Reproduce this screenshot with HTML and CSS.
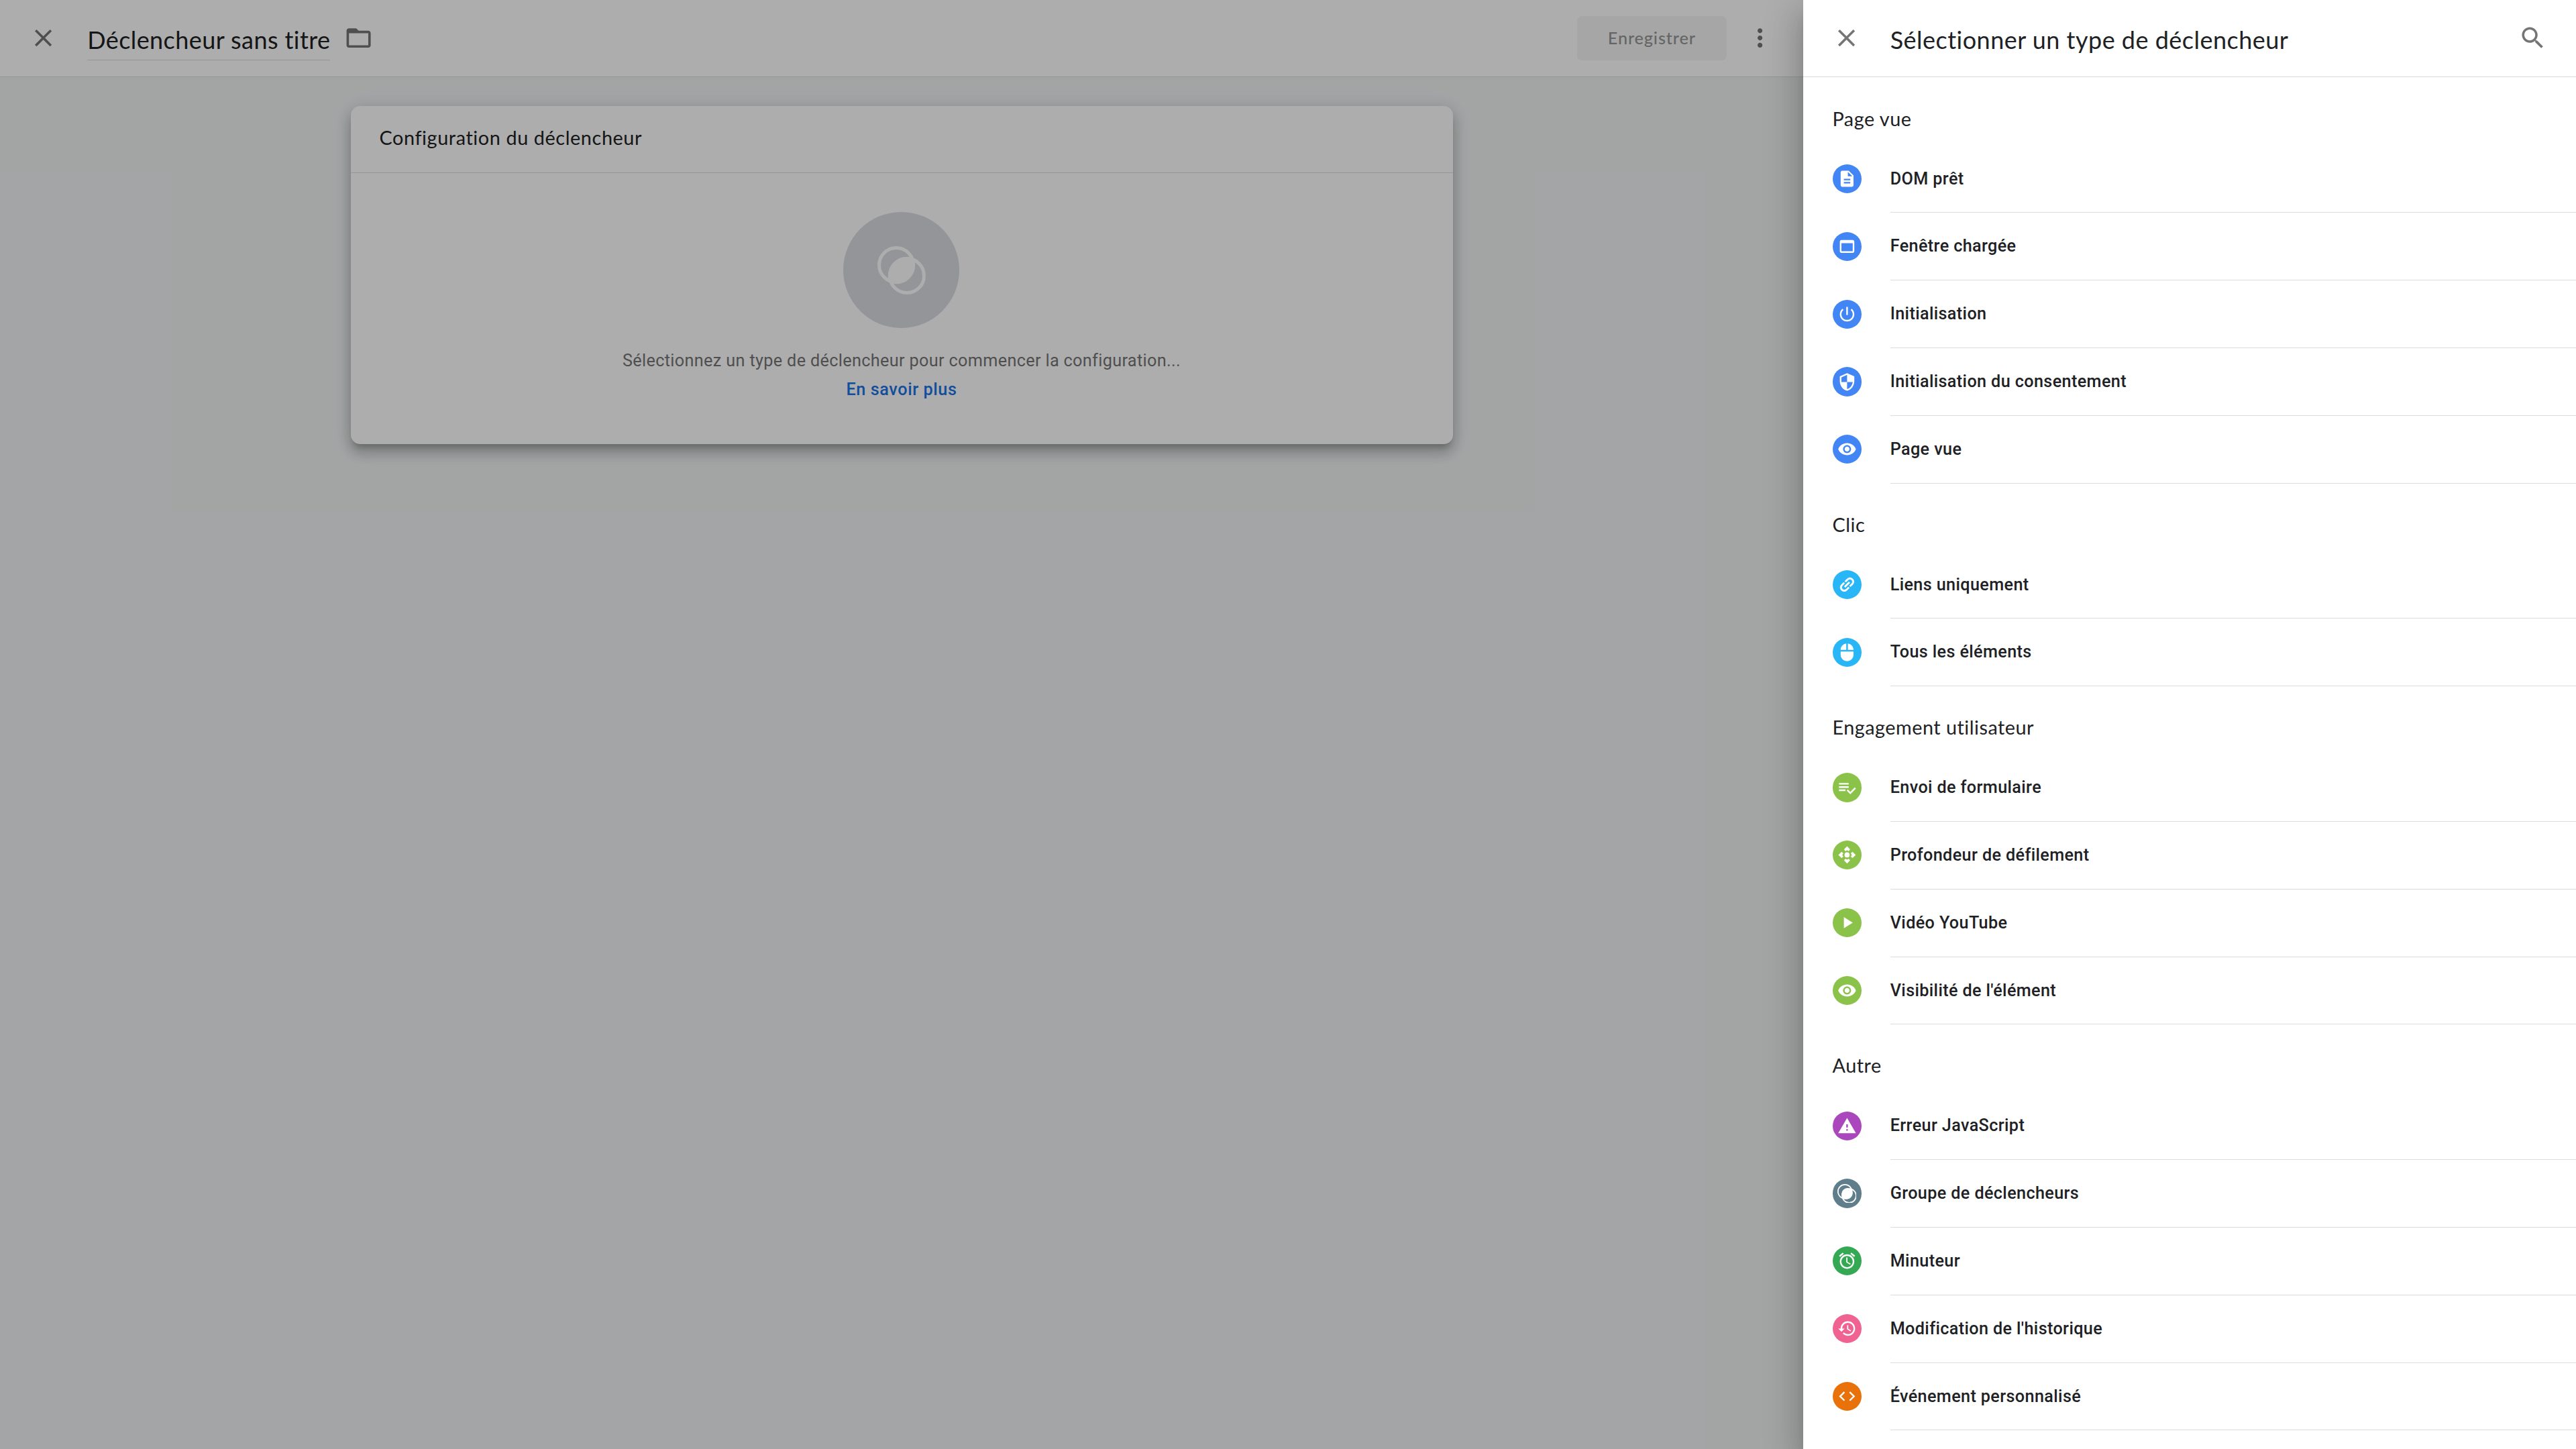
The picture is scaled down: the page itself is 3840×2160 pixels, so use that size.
FILE: index.html
```html
<!DOCTYPE html>
<html lang="fr">
	<head>
		<title>Déclencheur sans titre</title>
		<meta http-equiv="Content-Type" content="text/html; charset=utf-8">
		<link rel="stylesheet" href="styles.css">
	</head>
	<body>
		<div class="editor">
			<header class="bar">
				<svg class="icon close" viewBox="0 0 24 24"><path d="M19 6.41L17.59 5 12 10.59 6.41 5 5 6.41 10.59 12 5 17.59 6.41 19 12 13.41 17.59 19 19 17.59 13.41 12z"/></svg>
				<h1 class="name">Déclencheur sans titre</h1>
				<svg class="icon folder" viewBox="0 0 24 24"><path d="M20 6h-8l-2-2H4c-1.1 0-1.99.9-1.99 2L2 18c0 1.1.9 2 2 2h16c1.1 0 2-.9 2-2V8c0-1.1-.9-2-2-2zm0 12H4V8h16v10z"/></svg>
				<button class="save" disabled>Enregistrer</button>
				<svg class="icon more" viewBox="0 0 24 24"><path d="M12 8c1.1 0 2-.9 2-2s-.9-2-2-2-2 .9-2 2 .9 2 2 2zm0 2c-1.1 0-2 .9-2 2s.9 2 2 2 2-.9 2-2-.9-2-2-2zm0 6c-1.1 0-2 .9-2 2s.9 2 2 2 2-.9 2-2-.9-2-2-2z"/></svg>
			</header>
			<section class="card">
				<h2>Configuration du déclencheur</h2>
				<div class="empty">
					<div class="disc">
						<svg viewBox="0 0 40 40"><circle cx="15.6" cy="15.6" r="14.2"/><circle cx="24.4" cy="24.4" r="14.2"/><path d="M30.1 9.9A15.6 15.6 0 0 1 9.9 30.1A15.6 15.6 0 0 1 30.1 9.9z"/></svg>
					</div>
					<p>Sélectionnez un type de déclencheur pour commencer la configuration...</p>
					<a class="more-link">En savoir plus</a>
				</div>
			</section>
		</div>
		<div class="scrim"></div>
		<aside class="panel">
			<header class="bar">
				<svg class="icon close" viewBox="0 0 24 24"><path d="M19 6.41L17.59 5 12 10.59 6.41 5 5 6.41 10.59 12 5 17.59 6.41 19 12 13.41 17.59 19 19 17.59 13.41 12z"/></svg>
				<h1 class="title">Sélectionner un type de déclencheur</h1>
				<svg class="icon search" viewBox="0 0 24 24"><path d="M15.5 14h-.79l-.28-.27C15.41 12.59 16 11.11 16 9.5 16 5.91 13.09 3 9.5 3S3 5.91 3 9.5 5.91 16 9.5 16c1.61 0 3.09-.59 4.23-1.57l.27.28v.79l5 4.99L20.49 19l-4.99-5zm-6 0C7.01 14 5 11.99 5 9.5S7.01 5 9.5 5 14 7.01 14 9.5 11.99 14 9.5 14z"/></svg>
			</header>
			<div class="list">
				<h3>Page vue</h3>
				<ul class="types blue">
					<li><i><svg viewBox="0 0 24 24"><path d="M14 2H6c-1.1 0-1.99.9-1.99 2L4 20c0 1.1.89 2 1.99 2H18c1.1 0 2-.9 2-2V8l-6-6zm2 16H8v-2h8v2zm0-4H8v-2h8v2zm-3-5V3.5L18.5 9H13z"/></svg></i><span>DOM prêt</span></li>
					<li><i><svg viewBox="0 0 24 24"><path d="M19 4H5c-1.11 0-2 .9-2 2v12c0 1.1.89 2 2 2h14c1.1 0 2-.9 2-2V6c0-1.1-.89-2-2-2zm0 14H5V8h14v10z"/></svg></i><span>Fenêtre chargée</span></li>
					<li><i><svg viewBox="0 0 24 24"><path d="M13 3h-2v10h2V3zm4.83 2.17l-1.42 1.42C17.99 7.86 19 9.81 19 12c0 3.87-3.13 7-7 7s-7-3.13-7-7c0-2.19 1.01-4.14 2.58-5.42L6.17 5.17C4.23 6.82 3 9.26 3 12c0 4.97 4.03 9 9 9s9-4.03 9-9c0-2.74-1.23-5.18-3.17-6.83z"/></svg></i><span>Initialisation</span></li>
					<li><i><svg viewBox="0 0 24 24"><path d="M12 1L3 5v6c0 5.55 3.84 10.74 9 12 5.16-1.26 9-6.45 9-12V5l-9-4zm0 10.99h7c-.53 4.12-3.28 7.79-7 8.94V12H5V6.3l7-3.11v8.8z"/></svg></i><span>Initialisation du consentement</span></li>
					<li><i><svg viewBox="0 0 24 24"><path d="M12 4.5C7 4.5 2.73 7.61 1 12c1.73 4.39 6 7.5 11 7.5s9.27-3.11 11-7.5c-1.73-4.39-6-7.5-11-7.5zM12 17c-2.76 0-5-2.24-5-5s2.24-5 5-5 5 2.24 5 5-2.24 5-5 5zm0-8c-1.66 0-3 1.34-3 3s1.34 3 3 3 3-1.34 3-3-1.34-3-3-3z"/></svg></i><span>Page vue</span></li>
				</ul>
				<h3>Clic</h3>
				<ul class="types sky">
					<li><i><svg class="link" viewBox="0 0 24 24"><path transform="rotate(-45 12 12)" d="M3.9 12c0-1.71 1.39-3.1 3.1-3.1h4V7H7c-2.76 0-5 2.24-5 5s2.24 5 5 5h4v-1.9H7c-1.71 0-3.1-1.39-3.1-3.1zM8 13h8v-2H8v2zm9-6h-4v1.9h4c1.71 0 3.1 1.39 3.1 3.1s-1.39 3.1-3.1 3.1h-4V17h4c2.76 0 5-2.24 5-5s-2.24-5-5-5z"/></svg></i><span>Liens uniquement</span></li>
					<li><i><svg viewBox="0 0 24 24"><path d="M13 1.07V9h7c0-4.08-3.05-7.44-7-7.93zM4 15c0 4.42 3.58 8 8 8s8-3.58 8-8v-4H4v4zm7-13.93C7.05 1.56 4 4.92 4 9h7V1.07z"/></svg></i><span>Tous les éléments</span></li>
				</ul>
				<h3>Engagement utilisateur</h3>
				<ul class="types lime">
					<li><i><svg viewBox="0 0 24 24"><path d="M14 10H2v2h12v-2zm0-4H2v2h12V6zM2 16h8v-2H2v2zm19.5-4.5L23 13l-6.99 7-4.51-4.5L13 14l3.01 3 5.49-5.5z"/></svg></i><span>Envoi de formulaire</span></li>
					<li><i><svg viewBox="0 0 24 24"><circle cx="12" cy="12" r="3.2"/><path d="M12 1.2l3.8 4-1.9 2.2L12 6l-1.9 1.4-1.9-2.2zM12 22.8l3.8-4-1.9-2.2L12 18l-1.9-1.4-1.9 2.2zM1.2 12l4-3.8 2.2 1.9L6 12l1.4 1.9-2.2 1.9zM22.8 12l-4-3.8-2.2 1.9L18 12l-1.4 1.9 2.2 1.9z"/></svg></i><span>Profondeur de défilement</span></li>
					<li><i><svg viewBox="0 0 24 24"><path d="M8 5v14l11-7z"/></svg></i><span>Vidéo YouTube</span></li>
					<li><i><svg viewBox="0 0 24 24"><path d="M12 4.5C7 4.5 2.73 7.61 1 12c1.73 4.39 6 7.5 11 7.5s9.27-3.11 11-7.5c-1.73-4.39-6-7.5-11-7.5zM12 17c-2.76 0-5-2.24-5-5s2.24-5 5-5 5 2.24 5 5-2.24 5-5 5zm0-8c-1.66 0-3 1.34-3 3s1.34 3 3 3 3-1.34 3-3-1.34-3-3-3z"/></svg></i><span>Visibilité de l'élément</span></li>
				</ul>
				<h3>Autre</h3>
				<ul class="types">
					<li><i class="purple"><svg viewBox="0 0 24 24"><path d="M1 21h22L12 2 1 21zm12-3h-2v-2h2v2zm0-4h-2v-4h2v4z"/></svg></i><span>Erreur JavaScript</span></li>
					<li><i class="slate"><svg class="rings" viewBox="0 0 40 40"><circle cx="15.6" cy="15.6" r="14.4"/><circle cx="24.4" cy="24.4" r="14.4"/><path d="M29.1 10.9A13 13 0 0 1 10.9 29.1A13 13 0 0 1 29.1 10.9z"/></svg></i><span>Groupe de déclencheurs</span></li>
					<li><i class="green"><svg viewBox="0 0 24 24"><path d="M22 5.72l-4.6-3.86-1.29 1.53 4.6 3.86L22 5.72zM7.88 3.39L6.6 1.86 2 5.71l1.29 1.53 4.59-3.85zM12.5 8H11v6l4.75 2.85.75-1.23-4-2.37V8zM12 4c-4.97 0-9 4.03-9 9s4.02 9 9 9c4.97 0 9-4.03 9-9s-4.03-9-9-9zm0 16c-3.87 0-7-3.13-7-7s3.13-7 7-7 7 3.13 7 7-3.13 7-7 7z"/></svg></i><span>Minuteur</span></li>
					<li><i class="pink"><svg viewBox="0 0 24 24"><path d="M13 3c-4.97 0-9 4.03-9 9H1l3.89 3.89.07.14L9 12H6c0-3.87 3.13-7 7-7s7 3.13 7 7-3.13 7-7 7c-1.93 0-3.68-.79-4.94-2.06l-1.42 1.42C8.27 19.99 10.51 21 13 21c4.97 0 9-4.03 9-9s-4.03-9-9-9zm-1 5v5l4.28 2.54.72-1.21-3.5-2.08V8H12z"/></svg></i><span>Modification de l'historique</span></li>
					<li><i class="orange"><svg viewBox="0 0 24 24"><path d="M9.4 16.6L4.8 12l4.6-4.6L8 6l-6 6 6 6 1.4-1.4zm5.2 0l4.6-4.6-4.6-4.6L16 6l6 6-6 6-1.4-1.4z"/></svg></i><span>Événement personnalisé</span></li>
				</ul>
			</div>
		</aside>
	</body>
</html>
```
FILE: styles.css
```css
* {
	box-sizing: border-box;
}
body {
	margin: 0;
	height: 2160px;
	overflow: hidden;
	position: relative;
	display: flex;
	font-family: Roboto, Arial, sans-serif;
	font-size: 25.2px;
	color: #202124;
	background-color: #f1f3f4;
}
h1, h2, h3, .save {
	font-family: Lato, 'Open Sans', sans-serif;
	font-weight: 400;
	margin: 0;
}
.editor {
	width: 2688px;
	height: 2160px;
}
.bar {
	display: flex;
	align-items: center;
	height: 115px;
	background-color: #fff;
	border-bottom: 1px solid #dadada;
}
.icon {
	flex: none;
	width: 43.2px;
	height: 43.2px;
	fill: #757575;
}
.close {
	margin-left: 43px;
}
.bar h1 {
	font-size: 36px;
	line-height: 44px;
	letter-spacing: .42px;
	white-space: nowrap;
}
.name {
	margin-left: 44px;
	padding-top: 12px;
	height: 65px;
	width: 362px;
	border-bottom: 1px solid #dadce0;
}
.folder {
	margin-left: 21px;
}
.save {
	margin-left: auto;
	width: 223px;
	height: 66px;
	padding-bottom: 3px;
	border: none;
	border-radius: 7px;
	font-size: 25.2px;
	font-weight: 500;
	letter-spacing: .9px;
	color: #959595;
	background-color: #f5f5f5;
}
.more {
	margin: 0 43px 0 28px;
}

.card {
	width: 1643px;
	height: 504px;
	margin: 43px auto 0;
	background-color: #fff;
	border-radius: 14px;
	box-shadow: 0 9px 9px -5px rgba(0,0,0,.2), 0 14px 18px 2px rgba(0,0,0,.14), 0 5px 25px 4px rgba(0,0,0,.12);
}
.card h2 {
	height: 100px;
	padding-left: 43px;
	font-size: 28.8px;
	line-height: 95px;
	letter-spacing: .6px;
	border-bottom: 1px solid #dadce0;
}
.empty {
	display: flex;
	flex-direction: column;
	align-items: center;
	padding-top: 58px;
}
.disc {
	display: flex;
	align-items: center;
	justify-content: center;
	width: 173px;
	height: 173px;
	margin-right: 1px;
	border-radius: 50%;
	background-color: #dadce0;
}
.disc svg {
	width: 72px;
	height: 72px;
}
.disc circle {
	fill: none;
	stroke: #fff;
	stroke-width: 2.8;
}
.disc path {
	fill: #fff;
}
.empty p {
	margin: 27px 0 0;
	line-height: 43px;
	letter-spacing: .36px;
	color: #757575;
}
.more-link {
	line-height: 43px;
	font-weight: 500;
	letter-spacing: .6px;
	color: #1a73e8;
}

.scrim {
	position: absolute;
	top: 0;
	left: 0;
	width: 100%;
	height: 100%;
	background-color: rgba(0,0,0,.32);
}
.panel {
	position: relative;
	width: 1152px;
	height: 2160px;
	background-color: #fff;
	box-shadow: 0 14px 18px -9px rgba(0,0,0,.2), 0 29px 43px 4px rgba(0,0,0,.14), 0 11px 54px 9px rgba(0,0,0,.12);
}
.bar .title {
	margin-left: 43.5px;
	padding-top: 3px;
	letter-spacing: .48px;
}
.search {
	margin: 0 43px 0 auto;
}
.list {
	padding: .8px 0 0 43.5px;
}
.list h3 {
	height: 100.83px;
	padding-top: 43px;
	font-size: 28.8px;
	line-height: 36px;
	letter-spacing: .5px;
}
.types {
	margin: 0;
	padding: 0;
	list-style: none;
}
.types li {
	display: flex;
	align-items: center;
	gap: 43px;
	height: 100.83px;
}
.types span {
	flex: 1;
	height: 100%;
	line-height: 99px;
	font-weight: 500;
	letter-spacing: .38px;
	border-bottom: 1px solid #dadce0;
}
.types i {
	display: flex;
	align-items: center;
	justify-content: center;
	width: 43.2px;
	height: 43.2px;
	margin-bottom: 1px;
	border-radius: 50%;
}
.types svg {
	width: 28.8px;
	height: 28.8px;
	fill: #fff;
}
.types .link {
	stroke: #fff;
	stroke-width: .5;
}
.types .rings circle {
	fill: none;
	stroke: #fff;
	stroke-width: 2.4;
}
.blue i { background-color: #4285f4; }
.sky i { background-color: #29b6f6; }
.lime i { background-color: #8bc34a; }
.purple { background-color: #ab47bc; }
.slate { background-color: #607d8b; }
.green { background-color: #34a853; }
.pink { background-color: #f06292; }
.orange { background-color: #e8710a; }
```
